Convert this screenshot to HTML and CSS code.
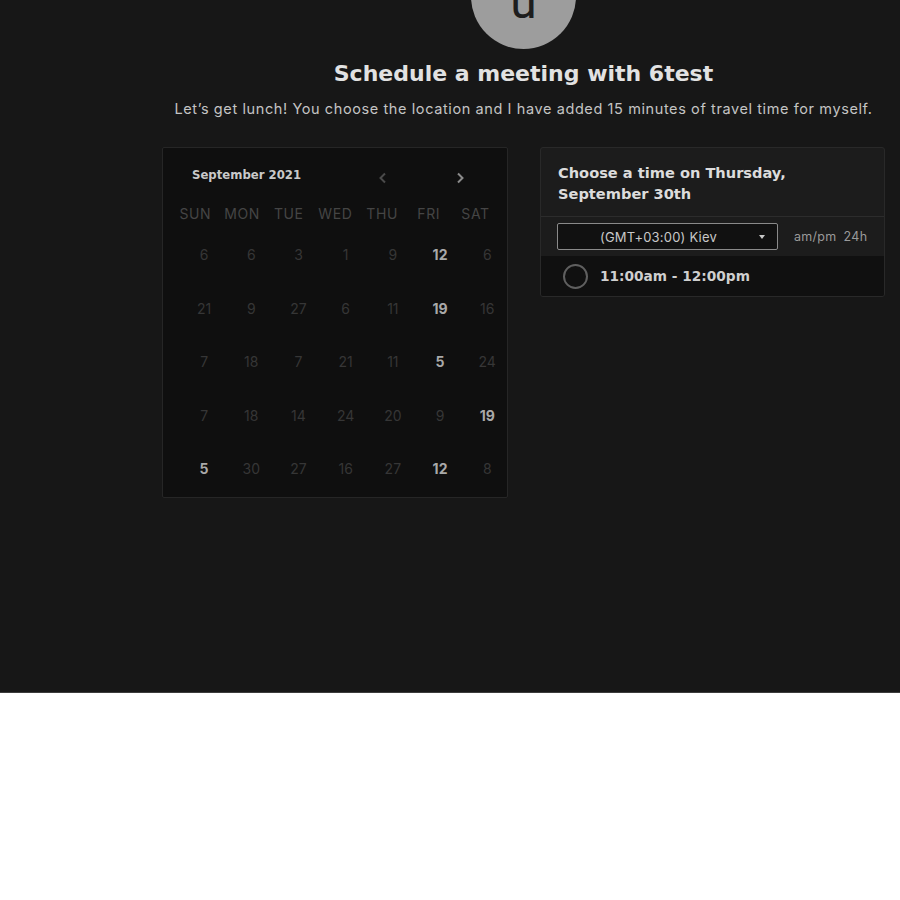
FILE: index.html
```html
<!DOCTYPE html>
<html>
<head>
<meta charset="utf-8">
<link rel="stylesheet" href="styles.css">
</head>
<body>
<div class="page">
  <div class="column">
    <div class="avatar"><span>u</span></div>
    <h1 class="title">Schedule a meeting with 6test</h1>
    <p class="subtitle">Let’s get lunch! You choose the location and I have added 15 minutes of travel time for myself.</p>
    <div class="panels">
      <div class="cal">
        <div class="cal-head">
          <span class="month">September 2021</span>
          <span class="chev chev-prev">
            <svg width="10" height="12" viewBox="0 0 10 12"><path d="M7 1.5 L2.5 6 L7 10.5" fill="none" stroke="#4a4a4a" stroke-width="2"/></svg>
          </span>
          <span class="chev chev-next">
            <svg width="10" height="12" viewBox="0 0 10 12"><path d="M3 1.5 L7.5 6 L3 10.5" fill="none" stroke="#8a8a8a" stroke-width="2"/></svg>
          </span>
        </div>
        <div class="weekdays">
          <span>SUN</span><span>MON</span><span>TUE</span><span>WED</span><span>THU</span><span>FRI</span><span>SAT</span>
        </div>
        <div class="days">
          <span>6</span><span>6</span><span>3</span><span>1</span><span>9</span><span class="on">12</span><span>6</span>
          <span>21</span><span>9</span><span>27</span><span>6</span><span>11</span><span class="on">19</span><span>16</span>
          <span>7</span><span>18</span><span>7</span><span>21</span><span>11</span><span class="on">5</span><span>24</span>
          <span>7</span><span>18</span><span>14</span><span>24</span><span>20</span><span>9</span><span class="on">19</span>
          <span class="on">5</span><span>30</span><span>27</span><span>16</span><span>27</span><span class="on">12</span><span>8</span>
        </div>
      </div>
      <div class="slots">
        <div class="slots-head">Choose a time on Thursday,<br>September 30th</div>
        <div class="tz-row">
          <div class="tz-select">
            <span class="tz-label">(GMT+03:00) Kiev</span>
            <span class="caret"></span>
          </div>
          <div class="fmt"><span>am/pm</span><span>24h</span></div>
        </div>
        <div class="slot">
          <span class="radio"></span>
          <span class="slot-label">11:00am - 12:00pm</span>
        </div>
      </div>
    </div>
  </div>
</div>
</body>
</html>
```

FILE: styles.css
```css
* { box-sizing: border-box; }
html, body { margin: 0; padding: 0; background: #ffffff; }
body { font-family: Inter, "Liberation Sans", sans-serif; }

.page {
  height: 693px;
  background: #171717;
  border-bottom: 1px solid #3c3c3c;
  overflow: hidden;
  padding-left: 162px;
}

.column {
  width: 723px;
  display: flex;
  flex-direction: column;
  align-items: center;
}

.avatar {
  width: 105px;
  height: 105px;
  margin-top: -56px;
  border-radius: 50%;
  background: #9d9d9d;
  display: flex;
  justify-content: center;
  align-items: center;
}
.avatar span {
  font-family: Roboto, sans-serif;
  font-size: 48px;
  line-height: 1;
  color: #1e1e1e;
  padding-top: 10px;
}

.title {
  margin: 11px 0 0;
  font-family: "DejaVu Sans", sans-serif;
  font-size: 22px;
  line-height: 28px;
  font-weight: 700;
  color: #e2e2e2;
}

.subtitle {
  margin: 11px 0 0;
  font-size: 14.5px;
  letter-spacing: 0.6px;
  line-height: 20px;
  color: #c4c4c4;
}

.panels {
  align-self: stretch;
  margin-top: 28px;
  display: flex;
  gap: 32px;
  align-items: flex-start;
}

/* calendar */
.cal {
  width: 346px;
  height: 351px;
  background: #0f0f0f;
  border: 1px solid #262626;
  border-radius: 2px;
}
.cal-head {
  display: flex;
  align-items: center;
  height: 52px;
  padding-left: 29px;
  padding-top: 8px;
}
.month {
  font-family: "DejaVu Sans", sans-serif;
  font-size: 11.7px;
  font-weight: 700;
  color: #c9c9c9;
  width: 186px;
  margin-top: -7px;
}
.chev { display: flex; }
.chev-next { margin-left: 67px; }

.weekdays {
  display: grid;
  grid-template-columns: repeat(7, 46.7px);
  margin-left: 9px;
  height: 26px;
  align-items: center;
  font-size: 14px;
  letter-spacing: 0.6px;
  color: #454545;
  text-align: center;
}

.days {
  display: grid;
  grid-template-columns: repeat(7, 47.2px);
  grid-auto-rows: 53.5px;
  margin-left: 17.5px;
  margin-top: 1px;
  font-size: 14px;
  color: #363636;
  text-align: center;
}
.days span { line-height: 53.5px; margin-top: 1px; }
.days .on { color: #a9a9a9; font-weight: 700; }

/* slots */
.slots {
  width: 345px;
  background: #1c1c1c;
  border: 1px solid #292929;
  border-radius: 3px;
  overflow: hidden;
}
.slots-head {
  padding: 14px 17px 12px;
  font-family: "DejaVu Sans", sans-serif;
  font-size: 14.6px;
  line-height: 21px;
  font-weight: 700;
  color: #dcdcdc;
  border-bottom: 1px solid #2c2c2c;
}
.tz-row {
  display: flex;
  align-items: center;
  height: 39px;
  padding-left: 16px;
}
.tz-select {
  width: 221px;
  height: 27px;
  border: 1px solid #8a8a8a;
  border-radius: 2px;
  background: #111111;
  display: flex;
  align-items: center;
  padding-left: 42px;
}
.tz-label {
  font-size: 13px;
  letter-spacing: 0.2px;
  color: #c8c8c8;
  flex: 1;
}
.caret {
  width: 0;
  height: 0;
  border-left: 3.5px solid transparent;
  border-right: 3.5px solid transparent;
  border-top: 4px solid #c8c8c8;
  margin-right: 12px;
}
.fmt {
  margin-left: 16px;
  display: flex;
  gap: 7px;
  font-size: 12.5px;
  letter-spacing: 0.3px;
  color: #9a9a9a;
}
.slot {
  height: 40px;
  background: #101010;
  display: flex;
  align-items: center;
  padding-left: 22px;
}
.radio {
  width: 25px;
  height: 25px;
  border: 2px solid #5f5f5f;
  border-radius: 50%;
}
.slot-label {
  margin-left: 12px;
  font-family: "DejaVu Sans", sans-serif;
  font-size: 13.7px;
  font-weight: 700;
  color: #cfcfcf;
}
```
